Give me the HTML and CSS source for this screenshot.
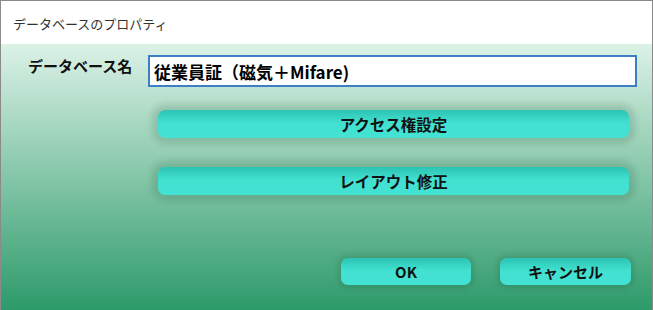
FILE: index.html
```html
<!DOCTYPE html>
<html lang="ja">
<head>
    <meta charset="UTF-8">
    <meta name="viewport" content="width=device-width, initial-scale=1.0">
    <title>データベースのプロパティ</title>
    <link rel="stylesheet" href="styles.css">
</head>
<body>
    <div class="window">
        <div class="titlebar">データベースのプロパティ</div>
        <div class="content">
            <div class="name-row">
                <label class="name-label" for="dbName">データベース名</label>
                <input type="text" id="dbName" class="name-input" value="従業員証（磁気＋Mifare)">
            </div>
            <div class="actions">
                <div class="wide-wrap"><button class="btn wide">アクセス権設定</button></div>
                <div class="wide-wrap"><button class="btn wide">レイアウト修正</button></div>
            </div>
            <div class="footer">
                <button class="btn small">OK</button>
                <button class="btn small cancel">キャンセル</button>
            </div>
        </div>
    </div>
</body>
</html>
```

FILE: styles.css
```css
body {
    margin: 0;
    padding: 0;
    font-family: "Noto Sans CJK JP", "Noto Sans", sans-serif;
    background-color: #fff;
}
.window {
    width: 651px;
    height: 309px;
    border: 1px solid #8a8a8a;
    border-bottom-color: #6f7f78;
    display: flex;
    flex-direction: column;
}
.titlebar {
    height: 43px;
    line-height: 45px;
    padding-left: 12px;
    font-size: 13px;
    color: #333;
    background-color: #fff;
}
.content {
    flex: 1;
    background: linear-gradient(#dcf2e7, #2d9a6a);
    padding: 11px 0 0 0;
}
.name-row {
    display: flex;
    align-items: flex-start;
    height: 32px;
}
.name-label {
    width: 120px;
    padding-left: 27px;
    font-size: 15px;
    font-weight: bold;
    color: #111;
    line-height: 22px;
}
.name-input {
    width: 489px;
    height: 32px;
    box-sizing: border-box;
    border: 2px solid #3d7ec4;
    padding: 0 4px;
    font-family: inherit;
    font-size: 17px;
    font-weight: bold;
    color: #000;
    background-color: #fff;
    outline: none;
}
.actions {
    margin-left: 157px;
    width: 471px;
    padding-top: 23px;
    display: flex;
    flex-direction: column;
    gap: 29px;
}
.wide-wrap {
    border-radius: 8px;
    box-shadow: 0 0 6px 6px rgba(20, 70, 45, 0.16);
}
.btn {
    display: block;
    border: none;
    border-radius: 7px;
    background: linear-gradient(#2cc3b3, #41e0d0 45%, #43e2d2);
    font-family: inherit;
    font-weight: bold;
    color: #111;
    cursor: pointer;
    padding: 0;
}
.wide {
    width: 100%;
    height: 28px;
    font-size: 15.5px;
}
.footer {
    display: flex;
    justify-content: flex-end;
    gap: 29px;
    padding: 63px 21px 0 0;
}
.small {
    width: 130px;
    height: 27px;
    font-size: 15px;
    box-shadow: 0 0 5px 3px rgba(20, 70, 45, 0.17);
}
.cancel {
    width: 131px;
}
```
